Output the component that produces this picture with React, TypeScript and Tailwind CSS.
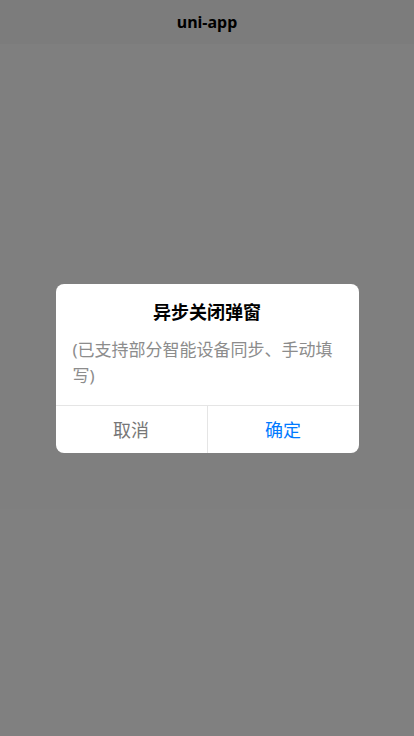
import React from "react";

export default function App() {
  return (
    <div
      className="relative h-[736px] w-full bg-white overflow-hidden"
      style={{ fontFamily: '"Noto Sans", "Noto Sans CJK SC", sans-serif' }}
    >
      <div className="h-[44px] bg-[#f8f8f8] flex items-center justify-center">
        <span className="text-[16px] font-bold text-black">uni-app</span>
      </div>
      <div className="absolute inset-0 bg-black/50 flex items-center justify-center">
        <div className="w-[303px] bg-white rounded-[8px] overflow-hidden">
          <div className="pt-[16px] text-center text-[18px] leading-[25px] font-bold text-black">
            异步关闭弹窗
          </div>
          <div className="px-[17px] pt-[12px] pb-[16px] text-[17px] leading-[26px] text-[#8c8c8c] text-left">
            (已支持部分智能设备同步、手动填写)
          </div>
          <div className="flex border-t border-[#e5e5e5] h-[48px]">
            <div className="flex-1 flex items-center justify-center pt-[2px] text-[18px] text-[#777777] border-r border-[#e5e5e5]">
              取消
            </div>
            <div className="flex-1 flex items-center justify-center pt-[2px] text-[18px] text-[#007aff]">
              确定
            </div>
          </div>
        </div>
      </div>
    </div>
  );
}
